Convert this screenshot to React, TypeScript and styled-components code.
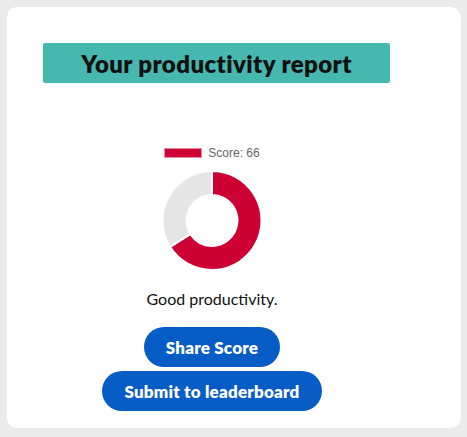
import React from "react"
import styled, { createGlobalStyle } from "styled-components"

const GlobalStyle = createGlobalStyle`
    html, body {
        margin: 0;
        padding: 0;
        background: #ebebeb;
    }
    body {
        font-family: Lato, "Noto Sans", sans-serif;
    }
`

const Page = styled.div`
    padding: 7px 6px 9px 7px;
`

const Card = styled.div`
    width: 454px;
    box-sizing: border-box;
    background: #ffffff;
    border-radius: 10px;
    padding: 36px 80px 17px 36px;
    display: flex;
    flex-direction: column;
    align-items: center;
`

const Header = styled.h1`
    align-self: flex-start;
    flex-shrink: 0;
    width: 347px;
    height: 40px;
    margin: 0 0 65px 0;
    background: #46b8af;
    border-radius: 2px;
    display: flex;
    align-items: center;
    justify-content: center;
    font-size: 24px;
    font-weight: 800;
    color: #111;
    letter-spacing: 0.4px;
`

const Legend = styled.div`
    display: flex;
    align-items: center;
    gap: 6px;
    height: 10px;
    margin-bottom: 13px;
    font-family: "Liberation Sans", Arial, sans-serif;
    font-size: 12px;
    color: #666;
`

const LegendBox = styled.span<{ color: string }>`
    width: 36px;
    height: 8px;
    background: ${(props) => props.color};
    border: 1px solid #f08aa6;
`

const Caption = styled.p`
    margin: 18px 0 17px 0;
    font-size: 16px;
    line-height: 22px;
    color: #111;
`

const Buttons = styled.div`
    display: flex;
    flex-direction: column;
    align-items: center;
    gap: 4px;
`

const PillButton = styled.button`
    height: 40px;
    padding: 0 22px;
    border: none;
    border-radius: 20px;
    background: #075cc6;
    color: #fff;
    font-family: Lato, "Noto Sans", sans-serif;
    font-size: 17px;
    font-weight: 800;
    letter-spacing: 0.2px;
    cursor: pointer;
`

const sector = (cx: number, cy: number, r: number, ir: number, a0: number, a1: number) => {
    const pt = (rad: number, a: number) => {
        const t = (a - 90) * Math.PI / 180
        return `${cx + rad * Math.cos(t)} ${cy + rad * Math.sin(t)}`
    }
    const large = a1 - a0 > 180 ? 1 : 0
    return `M ${pt(r, a0)} A ${r} ${r} 0 ${large} 1 ${pt(r, a1)} L ${pt(ir, a1)} A ${ir} ${ir} 0 ${large} 0 ${pt(ir, a0)} Z`
}

const Doughnut = ({ score }: { score: number }) => {
    const end = score / 100 * 360
    return (
        <svg width="100" height="99" viewBox="0 0 100 99">
            <path d={sector(50, 49.5, 49.5, 25.5, end, 360)} fill="#e5e5e5" stroke="#fff" strokeWidth="2" />
            <path d={sector(50, 49.5, 49.5, 25.5, 0, end)} fill="#cc0033" stroke="#fff" strokeWidth="2" />
        </svg>
    )
}

const App = () => {
    const score = 66
    return (
        <Page>
            <GlobalStyle />
            <Card>
                <Header>Your productivity report</Header>
                <Legend>
                    <LegendBox color="#cc0033" />
                    <span>Score: {score}</span>
                </Legend>
                <Doughnut score={score} />
                <Caption>Good productivity.</Caption>
                <Buttons>
                    <PillButton>Share Score</PillButton>
                    <PillButton>Submit to leaderboard</PillButton>
                </Buttons>
            </Card>
        </Page>
    )
}

export default App
